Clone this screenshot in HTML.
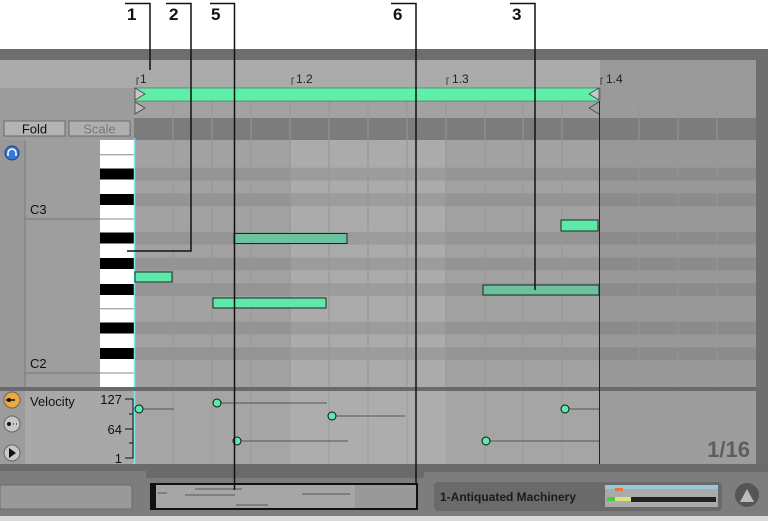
<!DOCTYPE html>
<html><head><meta charset="utf-8"><style>
html,body{margin:0;padding:0;background:#fff;}
body{width:768px;height:521px;overflow:hidden;position:relative;font-family:"Liberation Sans",sans-serif;}
svg{position:absolute;left:0;top:0;}
</style></head><body>
<svg width="768" height="521" viewBox="0 0 768 521" font-family="Liberation Sans, sans-serif">
<rect x="0" y="49" width="768" height="472" fill="#6e6e6e"/>
<rect x="0" y="60" width="756" height="404" fill="#a4a4a4"/>
<rect x="0" y="60" width="756" height="28" fill="#ababab"/>
<rect x="600" y="60" width="156" height="58" fill="#9a9a9a"/>
<rect x="0" y="88" width="134" height="52" fill="#9c9c9c"/>
<rect x="134" y="101" width="466" height="17" fill="#a2a2a2"/>
<rect x="134" y="118" width="622" height="22" fill="#7c7c7c"/>
<rect x="4" y="121" width="61" height="15" fill="#b4b4b4" stroke="#6a6a6a"/>
<text x="34.5" y="133.5" font-size="13" text-anchor="middle" fill="#111">Fold</text>
<rect x="69" y="121" width="61" height="15" fill="#b0b0b0" stroke="#6a6a6a"/>
<text x="99.5" y="133.5" font-size="13" text-anchor="middle" fill="#777">Scale</text>
<rect x="0" y="140" width="25" height="248" fill="#999"/>
<rect x="25" y="140" width="75" height="248" fill="#9e9e9e"/>
<line x1="25" y1="140" x2="25" y2="464" stroke="#7a7a7a"/>
<line x1="25" y1="219" x2="100" y2="219" stroke="#777"/>
<line x1="25" y1="373" x2="100" y2="373" stroke="#777"/>
<text x="30" y="214" font-size="13" fill="#111">C3</text>
<text x="30" y="368" font-size="13" fill="#111">C2</text>
<circle cx="12" cy="153" r="7" fill="#3a78d8" stroke="#1e3f80"/>
<path d="M8 156 v-3 a4 4 0 0 1 8 0 v3" fill="none" stroke="#fff" stroke-width="1.5"/>
<rect x="134" y="140" width="156" height="248" fill="#a2a2a2"/>
<rect x="290" y="140" width="156" height="248" fill="#ababab"/>
<rect x="446" y="140" width="154" height="248" fill="#a2a2a2"/>
<rect x="600" y="140" width="156" height="248" fill="#989898"/>
<g fill="#000" opacity="0.08">
<rect x="134" y="167.7" width="622" height="12.8"/>
<rect x="134" y="193.3" width="622" height="12.8"/>
<rect x="134" y="231.8" width="622" height="12.8"/>
<rect x="134" y="257.5" width="622" height="12.8"/>
<rect x="134" y="283.2" width="622" height="12.8"/>
<rect x="134" y="321.7" width="622" height="12.8"/>
<rect x="134" y="347.3" width="622" height="12.8"/>
</g>
<rect x="100" y="140" width="34" height="248" fill="#fff"/>
<g stroke="#888" stroke-width="1">
<line x1="100" y1="154.8" x2="134" y2="154.8"/>
<line x1="100" y1="219" x2="134" y2="219"/>
<line x1="100" y1="308.8" x2="134" y2="308.8"/>
<line x1="100" y1="373" x2="134" y2="373"/>
</g>
<g fill="#000">
<rect x="100" y="168.5" width="34" height="11"/>
<rect x="100" y="194" width="34" height="11"/>
<rect x="100" y="232.5" width="34" height="11"/>
<rect x="100" y="258" width="34" height="11"/>
<rect x="100" y="284" width="34" height="11"/>
<rect x="100" y="322.5" width="34" height="11"/>
<rect x="100" y="348" width="34" height="11"/>
</g>
<g stroke="#969696" stroke-width="1">
<line x1="173" y1="101" x2="173" y2="464"/><line x1="212" y1="101" x2="212" y2="464"/><line x1="251" y1="101" x2="251" y2="464"/>
<line x1="290" y1="101" x2="290" y2="464"/><line x1="329" y1="101" x2="329" y2="464"/><line x1="368" y1="101" x2="368" y2="464"/><line x1="407" y1="101" x2="407" y2="464"/>
<line x1="446" y1="101" x2="446" y2="464"/><line x1="485" y1="101" x2="485" y2="464"/><line x1="523" y1="101" x2="523" y2="464"/><line x1="562" y1="101" x2="562" y2="464"/>
<line x1="639" y1="101" x2="639" y2="464"/><line x1="678" y1="101" x2="678" y2="464"/><line x1="717" y1="101" x2="717" y2="464"/>
</g>
<g font-size="12" fill="#222">
<text x="140" y="83">1</text><text x="296" y="83">1.2</text><text x="452" y="83">1.3</text><text x="606" y="83">1.4</text>
</g>
<g stroke="#444" fill="none">
<path d="M137 85 v-7 h2"/><path d="M292 85 v-7 h2"/><path d="M447 85 v-7 h2"/><path d="M601 85 v-7 h2"/>
</g>
<rect x="135" y="88" width="465" height="13" fill="#5ff0a8" stroke="#555" stroke-width="0.6"/>
<path d="M135 88 l10 6 l-10 6z" fill="#c8c8c8" stroke="#444" stroke-width="0.8"/>
<path d="M135 102 l10 6 l-10 6z" fill="#bbb" stroke="#444" stroke-width="0.8"/>
<path d="M599 88 l-10 6 l10 6z" fill="#c8c8c8" stroke="#444" stroke-width="0.8"/>
<path d="M599 102 l-10 6 l10 6" fill="none" stroke="#444" stroke-width="0.8"/>
<line x1="134.5" y1="138" x2="134.5" y2="464" stroke="#7ee8f0" stroke-width="1.5"/>
<g stroke="#1a2a22" stroke-width="1">
<rect x="135" y="272" width="37" height="10" fill="#5ee9ab"/>
<rect x="213" y="298" width="113" height="10" fill="#5ee9ab"/>
<rect x="234" y="233.5" width="113" height="10" fill="#6cc19f"/>
<rect x="483" y="285" width="116" height="10" fill="#6cc19f"/>
<rect x="561" y="220" width="37" height="11" fill="#5ee9ab"/>
</g>
<rect x="0" y="387" width="756" height="4" fill="#6a6a6a"/>
<rect x="0" y="391" width="25" height="73" fill="#9c9c9c"/>
<rect x="25" y="391" width="109" height="73" fill="#a8a8a8"/>
<rect x="134" y="391" width="156" height="73" fill="#a5a5a5"/>
<rect x="290" y="391" width="156" height="73" fill="#adadad"/>
<rect x="446" y="391" width="154" height="73" fill="#a5a5a5"/>
<rect x="600" y="391" width="156" height="73" fill="#9d9d9d"/>
<g stroke="#9c9c9c"><line x1="173" y1="391" x2="173" y2="464"/><line x1="212" y1="391" x2="212" y2="464"/><line x1="251" y1="391" x2="251" y2="464"/><line x1="329" y1="391" x2="329" y2="464"/><line x1="368" y1="391" x2="368" y2="464"/><line x1="407" y1="391" x2="407" y2="464"/><line x1="485" y1="391" x2="485" y2="464"/><line x1="523" y1="391" x2="523" y2="464"/><line x1="562" y1="391" x2="562" y2="464"/><line x1="639" y1="391" x2="639" y2="464"/><line x1="678" y1="391" x2="678" y2="464"/><line x1="717" y1="391" x2="717" y2="464"/></g>
<line x1="134.5" y1="391" x2="134.5" y2="464" stroke="#7ee8f0" stroke-width="1.5"/>
<text x="30" y="406" font-size="13" fill="#111">Velocity</text>
<g font-size="13" fill="#111" text-anchor="end"><text x="122" y="404">127</text><text x="122" y="434">64</text><text x="122" y="463">1</text></g>
<path d="M125 399 h8 v59 h-8 M125 429 h8 M129 414 h4 M129 443 h4" fill="none" stroke="#111" stroke-width="1"/>
<circle cx="12" cy="400" r="8" fill="#f0a83a" stroke="#666"/><path d="M6 400 h9" stroke="#111" stroke-width="1.5"/><circle cx="9" cy="400" r="2" fill="#111"/>
<circle cx="12" cy="424" r="8" fill="#c8c8c8" stroke="#666"/><circle cx="9" cy="424" r="2" fill="#111"/><path d="M13 424h1M16 424h1" stroke="#111"/>
<circle cx="12" cy="453" r="8" fill="#c8c8c8" stroke="#666"/><path d="M9 448 l7 5 l-7 5z" fill="#111"/>
<g stroke="#555" stroke-width="1">
<line x1="139" y1="409" x2="174" y2="409"/><line x1="217" y1="403" x2="327" y2="403"/><line x1="332" y1="416" x2="405" y2="416"/>
<line x1="237" y1="441" x2="348" y2="441"/><line x1="486" y1="441" x2="599" y2="441"/><line x1="565" y1="409" x2="599" y2="409"/>
</g>
<g fill="#5ee9ab" stroke="#111" stroke-width="1">
<circle cx="139" cy="409" r="4"/><circle cx="217" cy="403" r="4"/><circle cx="332" cy="416" r="4"/>
<circle cx="237" cy="441" r="4"/><circle cx="486" cy="441" r="4"/><circle cx="565" cy="409" r="4"/>
</g>
<text x="750" y="457" font-size="22" font-weight="bold" fill="#5e5e5e" text-anchor="end">1/16</text>
<line x1="599.5" y1="101" x2="599.5" y2="464" stroke="#222"/>
<rect x="0" y="464" width="768" height="52" fill="#6a6a6a"/>
<rect x="0" y="471" width="146" height="45" fill="#7d7d7d"/>
<rect x="146" y="478" width="278" height="38" fill="#7d7d7d"/>
<rect x="424" y="472" width="344" height="44" fill="#7d7d7d"/>
<rect x="0" y="516" width="768" height="5" fill="#d8d8d8"/>
<rect x="0" y="485" width="132" height="24" rx="2" fill="#999" stroke="#6a6a6a"/>
<rect x="151" y="484" width="266" height="25" fill="#a6a6a6" stroke="#111" stroke-width="2"/>
<rect x="152" y="485" width="4" height="23" fill="#111"/>
<rect x="355" y="485" width="61" height="23" fill="#999"/>
<g stroke="#555"><line x1="195" y1="489" x2="242" y2="489"/><line x1="185" y1="495" x2="235" y2="495"/><line x1="236" y1="505" x2="268" y2="505"/><line x1="302" y1="494" x2="350" y2="494"/><line x1="158" y1="493" x2="167" y2="493"/></g>
<rect x="434" y="482" width="288" height="29" rx="4" fill="#6a6a6a"/>
<text x="440" y="501" font-size="12" font-weight="bold" fill="#1a1a1a">1-Antiquated Machinery</text>
<rect x="605" y="485" width="113" height="22" fill="#aaa"/>
<rect x="605" y="485" width="113" height="4" fill="#9bc5d8"/>
<rect x="631" y="497" width="85" height="5" fill="#222"/>
<rect x="607" y="497" width="8" height="4" fill="#4c4"/><rect x="615" y="497" width="16" height="4" fill="#dde080"/>
<rect x="615" y="488" width="8" height="3" fill="#e07a3a"/>
<circle cx="747" cy="495" r="12" fill="#555"/>
<path d="M740 502 l7 -13 l7 13z" fill="#bbb"/>
<g stroke="#111" stroke-width="1.5" fill="none">
<path d="M125 3.5 H150 V70"/>
<path d="M166 3.5 H191 V251 H127"/>
<path d="M210 3.5 H234.5 V490"/>
<path d="M391 3.5 H416 V483"/>
<path d="M510 3.5 H535 V290"/>
</g>
<g font-size="17" font-weight="bold" fill="#111">
<text x="127" y="20">1</text><text x="169" y="20">2</text><text x="211" y="20">5</text><text x="393" y="20">6</text><text x="512" y="20">3</text>
</g>
</svg>
</body></html>
